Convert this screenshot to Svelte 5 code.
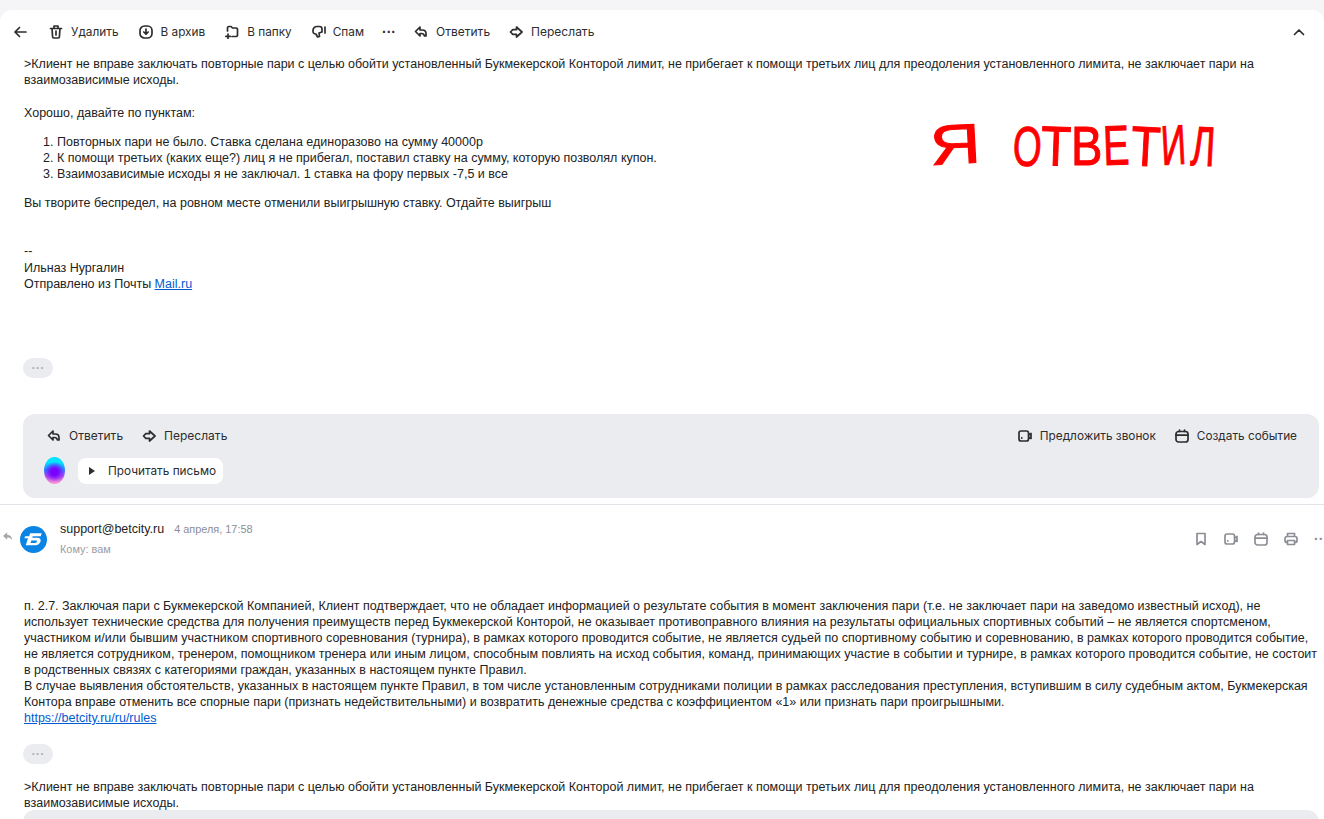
<script>
  // hand-written note: each letter gets its own width, tilt and stretch
  const scribble = [
    { ch: "Я", w: 50, scale: 1.25, tilt: -3 },
    { ch: "\u00a0", w: 33, scale: 1, tilt: 0 },
    { ch: "О", w: 28, scale: 0.66, tilt: 3 },
    { ch: "Т", w: 30, scale: 0.88, tilt: 2 },
    { ch: "В", w: 32, scale: 0.84, tilt: 0 },
    { ch: "Е", w: 28, scale: 0.7, tilt: -2 },
    { ch: "Т", w: 30, scale: 0.86, tilt: 3 },
    { ch: "И", w: 30, scale: 0.62, tilt: -3 },
    { ch: "Л", w: 24, scale: 0.66, tilt: 3 },
  ];
</script>

{#snippet reply()}
  <svg class="icon" viewBox="0 0 14 14"><path d="M6 2 1.500 6.500 6 11V8.500h1.500c1.600 0 2.600.8 3 2.500H12V8.500C12 6.200 10.600 5 8.200 5H6z" /></svg>
{/snippet}
{#snippet forward()}
  <svg class="icon" viewBox="0 0 14 14"><path d="M7.500 2 13 7l-5.500 5V9.300H3.800L1.500 7l2.300-2.300h3.700z" /></svg>
{/snippet}
{#snippet video()}
  <svg class="icon" viewBox="0 0 14 14"><path d="M3 2h5.500a2 2 0 0 1 2 2v6a2 2 0 0 1-2 2H3a2 2 0 0 1-2-2V4a2 2 0 0 1 2-2zM10.500 6 13 4.500v5L10.500 8" /><circle class="dot" cx="3.800" cy="9" r=".9" /></svg>
{/snippet}
{#snippet calendar()}
  <svg class="icon" viewBox="0 0 14 14"><rect x="1" y="2.500" width="12" height="10.500" rx="2.500" /><path d="M1 6.200h12M4.500 1v1.500M9.500 1v1.500" /></svg>
{/snippet}
{#snippet actions()}
  <div class="actions">
    <div class="row">
      <button class="act wide">{@render reply()}Ответить</button>
      <button class="act wide">{@render forward()}Переслать</button>
      <span class="grow"></span>
      <button class="act">{@render video()}Предложить звонок</button>
      <button class="act">{@render calendar()}Создать событие</button>
    </div>
    <div class="row read">
      <span class="orb"></span>
      <button class="read_btn"><span class="play"></span>Прочитать письмо</button>
    </div>
  </div>
{/snippet}

<div class="page">
  <div class="toolbar">
    <svg class="icon back" viewBox="0 0 14 14"><path d="M13 7H2M6.500 2.500 2 7l4.500 4.500" /></svg>
    <button class="tool delete">
      <svg class="icon" viewBox="0 0 14 14"><path d="M1.500 3.500h11M5 3V1h4v2M3 3.500l.6 8.300A1.500 1.500 0 0 0 5.100 13h3.800a1.500 1.500 0 0 0 1.500-1.200l.6-8.300M7 6v4" /></svg>Удалить
    </button>
    <button class="tool tight">
      <svg class="icon" viewBox="0 0 14 14"><rect x="1" y="1" width="12" height="12" rx="4.500" /><path d="M7 4v5M4.800 7 7 9.200 9.200 7" /></svg>В архив
    </button>
    <button class="tool">
      <svg class="icon" viewBox="0 0 14 14"><path d="M2.500 6V3a1.500 1.500 0 0 1 1.500-1.500h2L7.500 3H11a1.500 1.500 0 0 1 1.500 1.500V10A1.500 1.500 0 0 1 11 11.500H7M3 9v4.500M.8 11.300h4.500" /></svg>В папку
    </button>
    <button class="tool tight spam">
      <svg class="icon" viewBox="0 0 14 14"><path d="M5 1.500h2.500A2.500 2.500 0 0 1 10 4v3L7 8l.5 3.500-2 .5L4 9H3.500A2.500 2.500 0 0 1 1 6.500V5.500a4 4 0 0 1 4-4zM13 2v6" /></svg>Спам
    </button>
    <span class="more">···</span>
    <button class="tool wide reply_tool">{@render reply()}Ответить</button>
    <button class="tool wide">{@render forward()}Переслать</button>
    <span class="grow"></span>
    <svg class="icon caret" viewBox="0 0 14 14"><path d="M2.500 9.500 7 5l4.500 4.500" /></svg>
  </div>

  <div class="mail first">
    <p class="line">&gt;Клиент не вправе заключать повторные пари с целью обойти установленный Букмекерской Конторой лимит, не прибегает к помощи третьих лиц для преодоления установленного лимита, не заключает пари на взаимозависимые исходы.</p>
    <p class="gap">Хорошо, давайте по пунктам:</p>
    <ol>
      <li>Повторных пари не было. Ставка сделана единоразово на сумму 40000р</li>
      <li>К помощи третьих (каких еще?) лиц я не прибегал, поставил ставку на сумму, которую позволял купон.</li>
      <li>Взаимозависимые исходы я не заключал. 1 ставка на фору первых -7,5 и все</li>
    </ol>
    <p>Вы творите беспредел, на ровном месте отменили выигрышную ставку. Отдайте выигрыш</p>
    <p class="sign">--<br />Ильназ Нургалин<br />Отправлено из Почты <a href="#top">Mail.ru</a></p>
    <div class="pill first_pill">···</div>
    {@render actions()}

    <div class="scribble">
      {#each scribble as l}
        <span class="ch" style="width: {l.w}px; transform: rotate({l.tilt}deg) scaleX({l.scale})">{l.ch}</span>
      {/each}
    </div>
  </div>

  <div class="mail second">
    <div class="head">
      <svg class="back_arrow" viewBox="0 0 12 10"><path d="M5 0 0 4.500 5 9V6.300c2.500 0 4.500.7 6 3 0-3.500-2.500-6-6-6.300z" /></svg>
      <div class="avatar">
        <svg viewBox="0 0 28 28"><path d="M10.500 7.500h12l-1 3h-8.300l-.5 1.700h5c3 0 4.300 1.600 3.600 3.900-.7 2.500-2.900 3.900-5.400 3.900H6l2.300-7.200H4.500l.8-2.300h4.200zM11.800 15l-.8 2.500h4.600c1 0 1.600-.4 1.900-1.200.2-.8-.2-1.300-1.100-1.300z" /></svg>
      </div>
      <div class="who">
        <div><span class="addr">support@betcity.ru</span><span class="date">4 апреля, 17:58</span></div>
        <div class="to">Кому: вам</div>
      </div>
      <span class="grow"></span>
      <div class="head_icons">
        <svg class="icon" viewBox="0 0 14 14"><path d="M3 1.500h8V12.500L7 9.500 3 12.500z" /></svg>
        {@render video()}
        {@render calendar()}
        <svg class="icon" viewBox="0 0 14 14"><path d="M3.500 4.500V1.500h7v3M3.500 10.500H3A2 2 0 0 1 1 8.500V6.500a2 2 0 0 1 2-2h8a2 2 0 0 1 2 2v2a2 2 0 0 1-2 2h-.5M3.500 8.500h7v4h-7z" /></svg>
        <span class="more small">··</span>
      </div>
    </div>

    <p class="rules">п. 2.7. Заключая пари с Букмекерской Компанией, Клиент подтверждает, что не обладает информацией о результате события в момент заключения пари (т.е. не заключает пари на заведомо известный исход), не использует технические средства для получения преимуществ перед Букмекерской Конторой, не оказывает противоправного влияния на результаты официальных спортивных событий – не является спортсменом, участником и/или бывшим участником спортивного соревнования (турнира), в рамках которого проводится событие, не является судьей по спортивному событию и соревнованию, в рамках которого проводится событие, не является сотрудником, тренером, помощником тренера или иным лицом, способным повлиять на исход события, команд, принимающих участие в событии и турнире, в рамках которого проводится событие, не состоит в родственных связях с категориями граждан, указанных в настоящем пункте Правил.<br />В случае выявления обстоятельств, указанных в настоящем пункте Правил, в том числе установленным сотрудниками полиции в рамках расследования преступления, вступившим в силу судебным актом, Букмекерская Контора вправе отменить все спорные пари (признать недействительными) и возвратить денежные средства с коэффициентом «1» или признать пари проигрышными.<br /><a href="#top">https://betcity.ru/ru/rules</a></p>
    <div class="pill">···</div>
    <p class="line quoted">&gt;Клиент не вправе заключать повторные пари с целью обойти установленный Букмекерской Конторой лимит, не прибегает к помощи третьих лиц для преодоления установленного лимита, не заключает пари на взаимозависимые исходы.</p>
    <div class="next_box"></div>
  </div>
</div>

<style>
  :global(body) {
    background: #fff;
    overflow: hidden;
  }

  .page {
    height: 819px;
    overflow: hidden;
    background: #f5f5f7;
    padding-top: 10px;
    box-sizing: border-box;
    color: #2c2d2e;
  }

  .toolbar {
    display: flex;
    align-items: center;
    height: 42px;
    padding: 1px 18px 0 13px;
    box-sizing: border-box;
    background: #fff;
    border-radius: 12px 12px 0 0;
  }

  button {
    display: flex;
    align-items: center;
    padding: 0;
    border: 0;
    background: none;
    color: #2c2d2e;
    font: 11.800px/16px Inter, "Noto Sans", sans-serif;
    white-space: nowrap;
  }

  .wide {
    font-size: 12px;
  }

  .icon {
    width: 14px;
    height: 14px;
    flex: none;
    fill: none;
    stroke: #2c2d2e;
    stroke-width: 1.700;
    stroke-linejoin: round;
    stroke-linecap: round;
  }

  .dot {
    fill: #2c2d2e;
    stroke: none;
  }

  .tool {
    gap: 8px;
    margin-right: 20px;
  }

  .tight {
    gap: 7px;
  }

  .delete {
    margin-left: 22px;
    margin-right: 21px;
  }

  .spam {
    margin-right: 18px;
  }

  .reply_tool {
    margin-right: 19px;
  }

  .more {
    width: 12px;
    margin: 0 20px 0 0;
    font: bold 14px/16px "Liberation Sans", sans-serif;
  }

  .grow {
    flex: 1;
  }

  .mail {
    position: relative;
    background: #fff;
    font: 12.500px/16px "Liberation Sans", Arial, sans-serif;
    color: #222;
  }

  .first {
    height: 453px;
    padding: 4px 5px 0 24px;
    box-sizing: border-box;
    border-bottom: 1px solid #e2e2e8;
  }

  p {
    margin: 0;
  }

  .gap {
    margin-top: 17px;
  }

  ol {
    margin: 13px 0 13px;
    padding-left: 33px;
  }

  .sign {
    margin-top: 32px;
    line-height: 16.667px;
  }

  a {
    color: #005bd1;
    text-decoration: underline;
  }

  .pill {
    width: 30px;
    height: 20px;
    margin-left: -1px;
    border-radius: 10px;
    background: #ebecf0;
    color: #b0b2b8;
    font: bold 13px/19px "Liberation Sans", sans-serif;
    text-align: center;
  }

  .first_pill {
    margin-top: 65px;
  }

  .actions {
    margin: 36px 0 0 -1px;
    height: 84px;
    padding: 14px 22px 0 24px;
    box-sizing: border-box;
    background: #ebecf0;
    border-radius: 12px;
  }

  .row {
    display: flex;
    align-items: center;
    gap: 19px;
  }

  .act {
    gap: 8px;
  }

  .read {
    gap: 13px;
    margin: 13px 0 0 -3px;
  }

  .orb {
    width: 21px;
    height: 27px;
    border-radius: 50%;
    background:
      radial-gradient(circle at 50% 55%, #7a00ff 0 18%, rgb(122 0 255 / 0) 55%),
      linear-gradient(#00e5ff 0 20%, #2f7bff 48%, #b04cf0 70%, #ff9ad0 100%);
  }

  .read_btn {
    gap: 13px;
    height: 26px;
    padding: 0 7px 0 11px;
    background: #fff;
    border-radius: 8px;
  }

  .play {
    width: 0;
    height: 0;
    border-left: 6px solid #2c2d2e;
    border-top: 4px solid transparent;
    border-bottom: 4px solid transparent;
  }

  .scribble {
    position: absolute;
    left: 930px;
    top: 64px;
    display: flex;
    color: #f00;
    font: 56px/60px "Liberation Sans", sans-serif;
    -webkit-text-stroke: 1px #f00;
  }

  .ch {
    display: inline-block;
    white-space: nowrap;
    transform-origin: left center;
  }

  .second {
    padding: 0 5px 0 24px;
  }

  .head {
    display: flex;
    align-items: center;
    height: 58px;
    margin-left: -24px;
    margin-right: -5px;
    padding: 4px 0 0 3px;
    box-sizing: border-box;
  }

  .back_arrow {
    width: 10px;
    height: 9px;
    margin: 0 7px 0 0;
    fill: #a5a7ad;
  }

  .avatar {
    width: 27px;
    height: 27px;
    margin: 6px 13px 0 0;
    border-radius: 50%;
    background: #0b84e3;
  }

  .avatar svg {
    display: block;
    width: 27px;
    height: 27px;
    fill: #fff;
    fill-rule: evenodd;
  }

  .who {
    margin-top: 5px;
    line-height: 16px;
  }

  .addr {
    color: #222;
  }

  .date {
    margin-left: 10px;
    font-size: 10.900px;
    color: #8c8e96;
  }

  .to {
    margin-top: 4px;
    font-size: 10.900px;
    color: #9a9ca4;
  }

  .head_icons {
    display: flex;
    align-items: center;
    gap: 16px;
    margin: 6px 2px 0 0;
  }

  .head_icons .icon {
    stroke: #8c8e96;
  }

  .head_icons :global(.dot) {
    fill: #8c8e96;
  }

  .small {
    width: 8px;
    margin: 0;
    color: #8c8e96;
  }

  .rules {
    margin-top: 35px;
  }

  .rules + .pill {
    margin-top: 18px;
  }

  .quoted {
    margin-top: 15px;
  }

  .next_box {
    height: 40px;
    margin: -1px 0 0 -1px;
    background: #ebecf0;
    border-radius: 12px 12px 0 0;
  }
</style>
